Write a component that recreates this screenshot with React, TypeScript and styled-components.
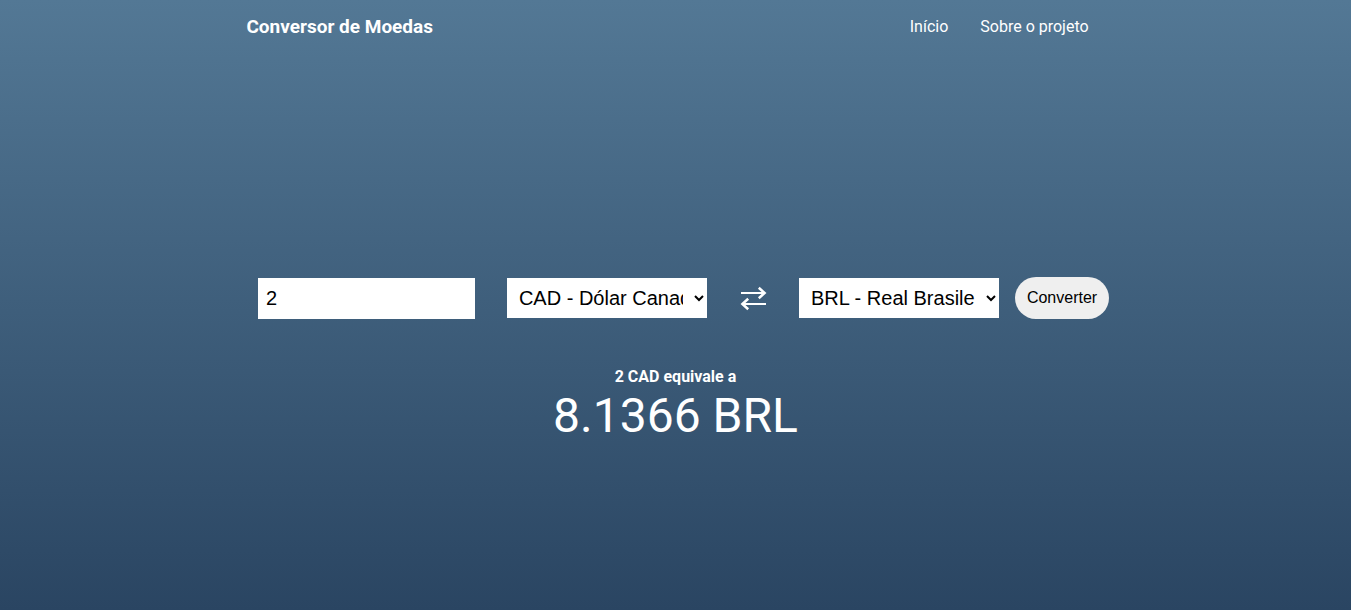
import { useState } from "react";
import styled, { createGlobalStyle } from "styled-components";

const GlobalStyle = createGlobalStyle`
  * {
    box-sizing: border-box;
    margin: 0;
    padding: 0;
  }

  body {
    font-family: Roboto, sans-serif;
    color: #fff;
  }
`;

const Page = styled.div`
  display: flex;
  flex-direction: column;
  min-height: 100vh;
  background: linear-gradient(to bottom, #537895, #2a4562);
`;

const Header = styled.header`
  display: flex;
  align-items: center;
  justify-content: space-around;
  padding: 16px 24px 16px 8px;
`;

const Brand = styled.h1`
  font-size: 19px;
  line-height: 22px;
  font-weight: 700;
`;

const Nav = styled.nav`
  display: flex;
  gap: 32px;
`;

const NavLink = styled.a`
  color: inherit;
  font-size: 16px;
  line-height: 20px;
  text-decoration: none;
`;

const Main = styled.main`
  flex: 1;
  display: flex;
  flex-direction: column;
  align-items: center;
  justify-content: center;
  gap: 48px;
  padding-top: 58px;
`;

const Form = styled.form`
  display: flex;
  align-items: center;
  gap: 32px;
  padding-left: 16px;
`;

const AmountInput = styled.input`
  width: 217px;
  height: 41px;
  padding: 8px;
  border: none;
  background: #fff;
  color: #000;
  font: 20px "Liberation Sans", Arial, sans-serif;
`;

const CurrencySelect = styled.select`
  width: 200px;
  height: 40px;
  padding: 8px;
  border: none;
  border-radius: 0;
  background: #fff;
  color: #000;
  font: 20px "Liberation Sans", Arial, sans-serif;
`;

const Target = styled.div`
  display: flex;
  align-items: center;
  gap: 16px;
`;

const SwapIcon = styled.svg`
  width: 28px;
  height: 28px;
  fill: none;
  stroke: currentColor;
  stroke-width: 2;
`;

const ConvertButton = styled.button`
  height: 42px;
  padding: 0 12px;
  border: none;
  border-radius: 24px;
  background: #efefef;
  color: #000;
  font: 16px "Liberation Sans", Arial, sans-serif;
`;

const Result = styled.section`
  text-align: center;
`;

const ResultLabel = styled.h2`
  font-size: 16px;
  line-height: 20px;
  font-weight: 700;
`;

const ResultValue = styled.p`
  font-size: 48px;
  line-height: 58px;
`;

const currencies = [
  { code: "CAD", name: "Dólar Canadense" },
  { code: "BRL", name: "Real Brasileiro" },
];

const rates: Record<string, number> = { CAD: 4.0683, BRL: 1 };

function CurrencyOptions() {
  return (
    <>
      {currencies.map(({ code, name }) => (
        <option key={code} value={code}>
          {code} - {name}
        </option>
      ))}
    </>
  );
}

export default function App() {
  const [amount, setAmount] = useState("2");
  const [from, setFrom] = useState("CAD");
  const [to, setTo] = useState("BRL");
  const [result, setResult] = useState({ amount: "2", from: "CAD", to: "BRL", value: "8.1366" });

  const convert = () => {
    const value = (Number(amount) * rates[from]) / rates[to];
    setResult({ amount, from, to, value: value.toFixed(4) });
  };

  return (
    <>
      <GlobalStyle />
      <Page>
        <Header>
          <Brand>Conversor de Moedas</Brand>
          <Nav>
            <NavLink href="#inicio">Início</NavLink>
            <NavLink href="#sobre">Sobre o projeto</NavLink>
          </Nav>
        </Header>
        <Main>
          <Form
            onSubmit={(event) => {
              event.preventDefault();
              convert();
            }}
          >
            <AmountInput
              aria-label="Valor"
              inputMode="decimal"
              value={amount}
              onChange={(event) => setAmount(event.target.value)}
            />
            <CurrencySelect
              aria-label="Moeda de origem"
              value={from}
              onChange={(event) => setFrom(event.target.value)}
            >
              <CurrencyOptions />
            </CurrencySelect>
            <SwapIcon viewBox="0 0 28 28" aria-hidden="true">
              <path d="M2 9H25M27 20H4" />
              <path
                d="M19.8 3.8L25.6 9L19.8 14.2M9.2 14.8L3.4 20L9.2 25.2"
                strokeWidth="2.5"
                strokeLinejoin="miter"
              />
            </SwapIcon>
            <Target>
              <CurrencySelect
                aria-label="Moeda de destino"
                value={to}
                onChange={(event) => setTo(event.target.value)}
              >
                <CurrencyOptions />
              </CurrencySelect>
              <ConvertButton type="submit">Converter</ConvertButton>
            </Target>
          </Form>
          <Result>
            <ResultLabel>
              {result.amount} {result.from} equivale a
            </ResultLabel>
            <ResultValue>
              {result.value} {result.to}
            </ResultValue>
          </Result>
        </Main>
      </Page>
    </>
  );
}
